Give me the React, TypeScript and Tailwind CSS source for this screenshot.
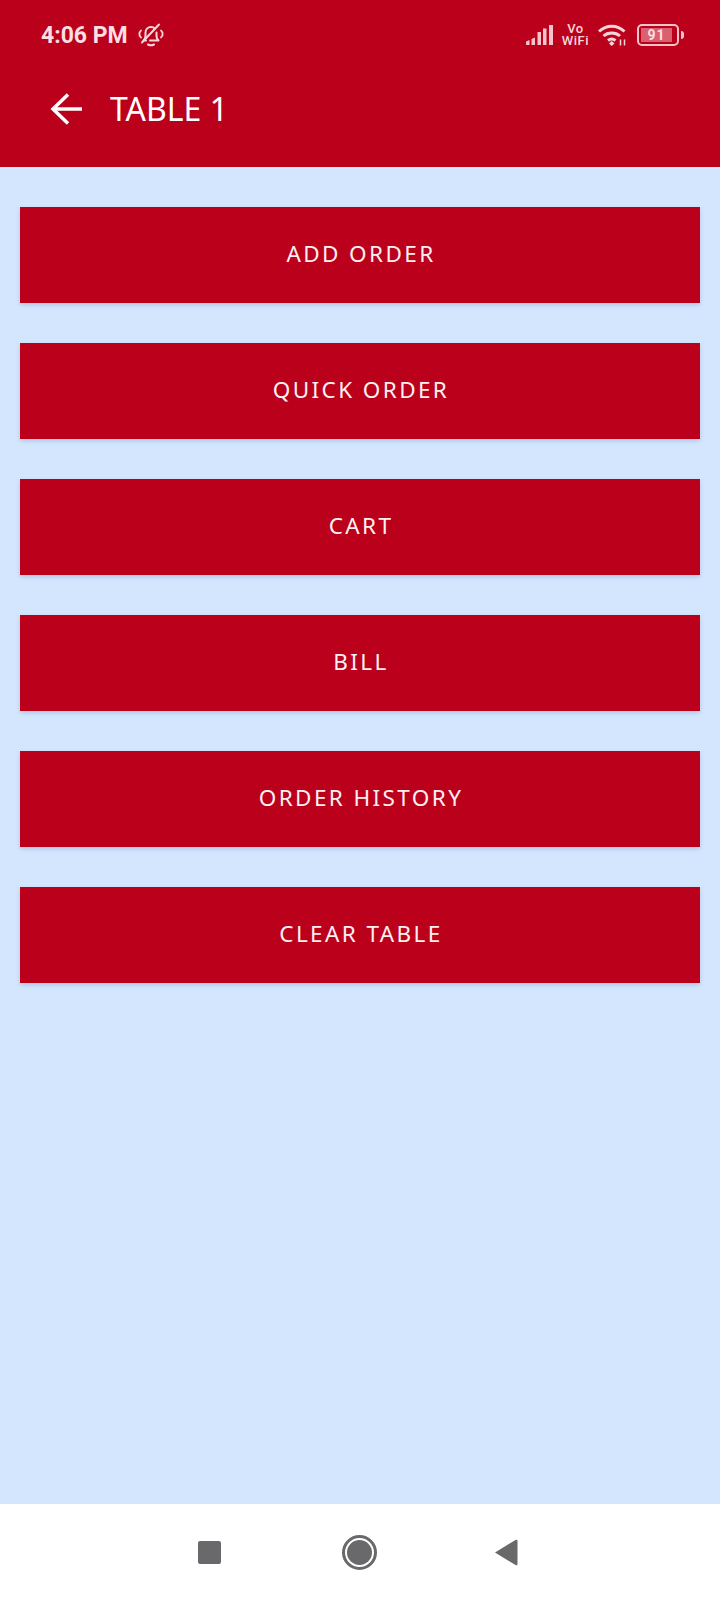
const actions = ["ADD ORDER", "QUICK ORDER", "CART", "BILL", "ORDER HISTORY", "CLEAR TABLE"];

const MutedBell = () => (
  <svg width="26" height="24" viewBox="0 0 26 24" fill="none" stroke="#f9d5da" strokeWidth="2" strokeLinecap="round" strokeLinejoin="round">
    <path d="M8 17.500H5.500c1.200-1.200 2-2.500 2-4.500V9.500c0-3 2.300-5.500 5.500-5.500 1.600 0 3 .6 4 1.600" />
    <path d="M12 17.500h8.500c-1.200-1.200-2-2.500-2-4.500V9.500" />
    <path d="M10 21.500c2 1 4 1 6 0" />
    <path d="M4 19.500 21 1.500" />
    <path d="M3 7.500 1.500 9.500v3L3 14.500M23 7.500l1.500 2v3L23 14.500" strokeWidth="1.800" />
  </svg>
);

const Signal = () => (
  <svg width="27" height="20" viewBox="0 0 27 20" fill="#f6c3ca">
    <path d="M0 16.500 3.500 15v5H0z" />
    <path d="M5.500 14 9 12.500V20H5.500z" />
    <rect x="11.500" y="7" width="3.500" height="13" />
    <rect x="17" y="3.500" width="3.500" height="16.500" />
    <rect x="23" y="0" width="4" height="20" />
  </svg>
);

const Wifi = () => (
  <svg width="30" height="24" viewBox="0 0 30 24" fill="none" stroke="#f9d5da" strokeWidth="3">
    <path d="M1 8.500c7.500-7 18-7 25.500 0" />
    <path d="M5.500 13c4.500-4 12-4 16.500 0" />
    <path d="M10 17.500c2.500-2 5-2 7.500 0" />
    <path d="M11 20.500l2.750-2.500 2.750 2.500-2.750 2.500z" fill="#f9d5da" stroke="none" />
    <path d="M22.500 16.500v6M26.500 16.500v6" strokeWidth="1.500" />
  </svg>
);

const Battery = () => (
  <div className="flex items-center gap-[2px]">
    <div className="flex h-[22px] w-[42px] items-stretch rounded-[5px] border-2 border-[#f6c3ca] p-[2px]">
      <div className="flex w-[91%] items-center justify-center bg-[#d9606f] font-['Roboto',sans-serif] text-[14px] font-bold leading-none tracking-[1px] text-[#fbdfe3]">
        91
      </div>
    </div>
    <div className="h-[8px] w-[3px] rounded-r-sm bg-[#f6c3ca]" />
  </div>
);

const BackArrow = () => (
  <svg width="34" height="34" viewBox="0 0 34 34" fill="none" stroke="#ffffff" strokeWidth="3.500">
    <path d="M33 17H4" />
    <path d="M19 2.500 4 17l15 14.500" />
  </svg>
);

const NavBar = () => (
  <div className="flex h-[96px] items-center justify-center bg-white pr-[4px]">
    <div className="h-[23px] w-[23px] rounded-[2px] bg-[#69686b]" />
    <div className="ml-[121px] flex h-[35px] w-[35px] items-center justify-center rounded-full border-[3px] border-[#69686b]">
      <div className="h-[25px] w-[25px] rounded-full bg-[#69686b]" />
    </div>
    <svg className="ml-[118px]" width="23" height="27" viewBox="0 0 23 27" fill="#69686b">
      <path d="M0 13.500 20.500 1q2-.8 2 1v23q0 1.800-2 1z" />
    </svg>
  </div>
);

export default function App() {
  return (
    <div className="flex h-[1600px] w-[720px] flex-col overflow-hidden bg-[#d3e6fe] font-['Noto_Sans',sans-serif]">
      <header className="h-[167px] bg-[#bb001b]">
        <div className="flex h-[70px] items-center justify-between pl-[41px] pr-[36px]">
          <div className="flex items-center gap-[10px]">
            <span className="font-['Roboto',sans-serif] text-[23px] font-bold leading-none text-[#fbdfe3]">4:06 PM</span>
            <MutedBell />
          </div>
          <div className="flex items-center gap-[9px]">
            <Signal />
            <div className="flex flex-col items-center font-['Roboto',sans-serif] text-[13px] font-medium leading-[12px] tracking-[0.5px] text-[#f9d5da]">
              <span>Vo</span>
              <span>WiFi</span>
            </div>
            <Wifi />
            <Battery />
          </div>
        </div>
        <div className="flex h-[80px] items-center gap-[27px] pb-[2px] pl-[49px]">
          <BackArrow />
          <h1 className="text-[32px] font-normal leading-none text-white">TABLE 1</h1>
        </div>
      </header>

      <main className="flex flex-1 flex-col gap-[40px] px-[20px] pt-[40px]">
        {actions.map((label) => (
          <button
            key={label}
            className="h-[96px] w-full bg-[#bb001b] pb-[3px] pl-[2px] text-[22.500px] tracking-[2.400px] text-[#fdf0f2] shadow-[0_2px_4px_rgba(120,140,180,0.35)]"
          >
            {label}
          </button>
        ))}
      </main>

      <NavBar />
    </div>
  );
}
